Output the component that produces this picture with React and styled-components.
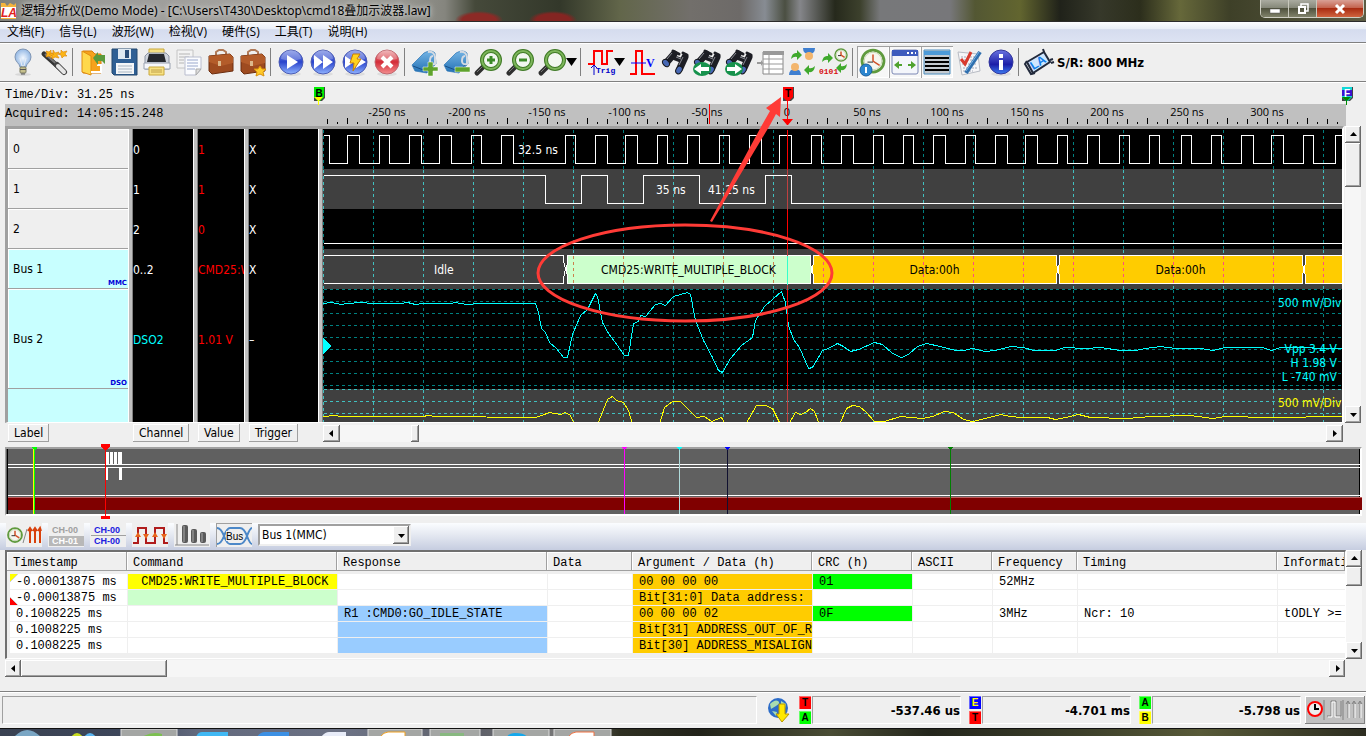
import React from 'react';
import styled, { createGlobalStyle, css } from 'styled-components';

const ui = "'DejaVu Sans Condensed', 'Noto Sans', 'Noto Sans CJK SC', sans-serif";
const menuFont = "'Open Sans', 'Noto Sans CJK SC', sans-serif";
const titleFont = "'Noto Sans', 'Noto Sans CJK SC', sans-serif";
const mono = "'Liberation Mono', monospace";

const GlobalStyle = createGlobalStyle`
    * {
        box-sizing: border-box;
    }
    body {
        margin: 0;
        background: #efefef;
        color: #000;
        font-family: ${ui};
        font-size: 12px;
        overflow: hidden;
    }
    button {
        font-family: inherit;
        padding: 0;
        border: 0;
        background: none;
    }
`;

const raised = css`
    background: #efefef;
    box-shadow: inset -1px -1px #696969, inset 1px 1px #fff,
        inset -2px -2px #a0a0a0;
`;

const Window = styled.div`
    height: 100vh;
    display: flex;
    flex-direction: column;
    overflow: hidden;

    & > * {
        flex-shrink: 0;
    }
`;

/* ---------- title and menu ---------- */

const TitleBar = styled.header`
    height: 22px;
    display: flex;
    align-items: flex-start;
    border-bottom: 1px solid #2b2b2b;
    background: radial-gradient(ellipse 24px 9px at 479px 20px, #8c2a26 70%, transparent),
        radial-gradient(ellipse 24px 9px at 553px 20px, #842522 70%, transparent),
        linear-gradient(
            90deg,
            #7f807a 0,
            #9a9a98 60px,
            #a3a29e 250px,
            #989892 400px,
            #85857e 445px,
            #45493a 475px,
            #33382a 560px,
            #62664a 620px,
            #726f6b 690px,
            #6d6a68 740px,
            #878c93 765px,
            #4b4f42 785px,
            #85868a 800px,
            #26291c 835px,
            #3c402c 860px,
            #77787a 880px,
            #77777a 950px,
            #535733 975px,
            #62652f 1020px,
            #20221a 1060px,
            #36382a 1100px,
            #2c2e1c 1140px,
            #66683a 1180px,
            #3e4028 1230px,
            #5c5c44 1366px
        );
`;

const TitleText = styled.h1`
    flex: 1;
    margin: 0 0 0 3px;
    font: 400 12px/21px ${titleFont};
    white-space: nowrap;
    text-shadow: 0 0 6px #ddd, 0 0 4px #ccc;
`;

const WindowControls = styled.div`
    display: flex;
    height: 18px;
    margin-right: 2px;
    border: 1px solid #cfcfc4;
    border-top: 0;
    border-radius: 0 0 5px 5px;
    overflow: hidden;
`;

const ControlButton = styled.button`
    width: ${(prop) => (prop.$close ? 46 : 28)}px;
    display: flex;
    align-items: center;
    justify-content: center;
    border-right: 1px solid ${(prop) => (prop.$close ? 'transparent' : '#c8c8bc')};
    background: ${(prop) =>
        prop.$close
            ? 'linear-gradient(#d9a095, #c4644f 45%, #a92c12 50%, #d0643f)'
            : 'linear-gradient(#aaaba0, #86887a 45%, #50523e 50%, #80826a)'};
`;

const MenuBar = styled.nav`
    height: 20px;
    display: flex;
    gap: 15px;
    padding-left: 7px;
    background: linear-gradient(#fcfdff, #e9eef7 35%, #d5dcee 38%, #dde3f3);
`;

const MenuLink = styled.a`
    font: 12px/19px ${menuFont};
    color: #000;
    text-decoration: none;
    white-space: nowrap;
`;

/* ---------- main toolbar ---------- */

const Toolbar = styled.div`
    height: 40px;
    display: flex;
    align-items: center;
    padding-left: 7px;
    border-top: 1px solid #808080;
    border-bottom: 1px solid #808080;
    box-shadow: inset 0 1px #fff, 0 1px #fff;
    white-space: nowrap;
`;

const ToolButton = styled.button`
    width: ${(prop) => (prop.$drop ? 42 : 32)}px;
    height: 32px;
    display: flex;
    align-items: center;
    ${(prop) =>
        prop.$pressed &&
        css`
            background: #f7f7f7;
            box-shadow: inset 1px 1px #a0a0a0, inset -1px -1px #fff;
        `}
`;

const Separator = styled.span`
    width: 1px;
    height: 28px;
    margin: 0 4px 0 1px;
    background: #808080;
`;

const SampleRate = styled.strong`
    margin-left: 2px;
    font-size: 13px;
`;

/* ---------- ruler ---------- */

const RulerPanel = styled.section`
    height: 44px;
    padding-top: 2px;
    display: flex;
`;

const InfoColumn = styled.div`
    width: 313px;
    flex-shrink: 0;
    padding-left: 5px;
    font: 12px/20px ${mono};
    white-space: nowrap;
`;

const InfoLine = styled.div`
    height: ${(prop) => (prop.$gray ? 22 : 20)}px;
    padding-top: ${(prop) => (prop.$gray ? 0 : 1)}px;
    background: ${(prop) => (prop.$gray ? '#c0c0c0' : 'transparent')};
`;

const RulerDrawing = styled.svg`
    flex: 1;
    min-width: 0;
    height: 42px;
`;

const ScaleText = styled.text`
    font: 11px 'Open Sans', sans-serif;
    text-anchor: middle;
`;

/* ---------- waveform area ---------- */

const WaveArea = styled.section`
    display: flex;
    height: 297px;
    padding: 0 5px;
    gap: 1px;
`;

const lanes = '120px 5px 60px 5px 46px 5px 69px 5px 1fr';

const WavePanel = styled.div`
    flex: 1;
    min-width: 0;
    display: grid;
    grid-template-columns: ${lanes};
    border: solid #a0a0a0;
    border-width: 3px 2px 1px 3px;
    border-right-color: #fff;
    border-bottom-color: #fff;
`;

const LabelCell = styled.div`
    height: ${(prop) => prop.$height}px;
    display: flex;
    align-items: center;
    justify-content: space-between;
    padding: 1px 0 0 5px;
    background: ${(prop) => (prop.$bus ? '#c8ffff' : '#efefef')};
    border-bottom: 1px solid #a0a0a0;
    box-shadow: inset 1px 1px #fff;

    small {
        align-self: flex-end;
        padding-right: 1px;
        font: 700 7px/9px 'DejaVu Sans', sans-serif;
        color: #0000d8;
    }
`;

const Lane = styled.div`
    overflow: hidden;
    background: ${(prop) => (prop.$label ? '#c8ffff' : '#000')};
`;

const LaneCell = styled.div`
    height: ${(prop) => prop.$height}px;
    display: flex;
    align-items: center;
    padding-top: 1px;
    color: ${(prop) => prop.$color};
    white-space: nowrap;
`;

const Splitter = styled.div`
    background: #c0c0c0;
    border-left: 1px solid #fff;
    border-right: 1px solid #808080;
`;

const WaveCanvas = styled.div`
    min-width: 0;
    height: 293px;
    overflow: hidden;
    background: #000;

    svg {
        display: block;
        width: 100%;
        height: 293px;
    }
`;

const WaveText = styled.text`
    font: 12px ${ui};
`;

/* ---------- scroll bars ---------- */

const ScrollTrack = styled.div`
    display: flex;
    flex-direction: ${(prop) => (prop.$vertical ? 'column' : 'row')};
    ${(prop) => (prop.$vertical ? 'width: 16px;' : 'height: 17px; flex: 1;')}
    background: #f6f6f6;
`;

const ScrollButton = styled.button`
    width: ${(prop) => (prop.$wide ? 17 : 16)}px;
    height: 17px;
    display: flex;
    align-items: center;
    justify-content: center;
    flex-shrink: 0;
    ${raised}
`;

const Thumb = styled.div`
    ${(prop) => (prop.$vertical ? `height: ${prop.$size}px;` : `width: ${prop.$size}px;`)}
    ${raised}
`;

const Gap = styled.div`
    flex: ${(prop) => (prop.$size ? `0 0 ${prop.$size}px` : 1)};
`;

const WaveFooter = styled.div`
    height: 20px;
    padding: 1px 23px 0 8px;
    display: grid;
    grid-template-columns: ${lanes};
`;

const HeaderButton = styled.button`
    grid-column: ${(prop) => prop.$column};
    justify-self: start;
    height: 18px;
    padding: 0 6px;
    font-size: 12px;
    line-height: 18px;
    background: #efefef;
    box-shadow: inset -1px -1px #a0a0a0, inset 1px 1px #fff;
`;

const FooterScroll = styled.div`
    grid-column: 9;
    display: flex;
    padding-top: 1px;
`;

/* ---------- overview ---------- */

const Overview = styled.section`
    height: 80px;
    padding: 4px 4px 0 5px;
`;

const OverviewBox = styled.div`
    height: 69px;
    border: 1px solid #a0a0a0;
    border-top-width: 2px;
    border-right: 2px solid #fff;
    border-bottom: 2px solid #fff;
    background: #606060;

    svg {
        display: block;
        width: 100%;
        height: 65px;
        overflow: visible;
    }
`;

/* ---------- bus toolbar ---------- */

const BusBar = styled.div`
    height: 27px;
    display: flex;
    gap: 6px;
    padding-left: 6px;
    background: linear-gradient(#fbfdff, #e4e8f1 45%, #c6cde0);
`;

const BusButton = styled.button`
    width: 36px;
    height: 24px;
    background: #efefef;
    ${(prop) => prop.$pressed && 'box-shadow: inset 1px 1px #a0a0a0;'}
`;

const BusSelect = styled.select`
    width: 153px;
    height: 22px;
    margin-top: 1px;
    padding-left: 2px;
    font: 12px ${ui};
    color: #000;
    background: #fff;
    border: 2px solid #a0a0a0;
    border-right-color: #efefef;
    border-bottom-color: #efefef;
    border-radius: 0;
    outline: 0;
    appearance: none;
`;

const SelectWrap = styled.div`
    position: relative;
    display: flex;
`;

const SelectArrow = styled.span`
    position: absolute;
    top: 3px;
    right: 2px;
    width: 16px;
    height: 18px;
    display: flex;
    align-items: center;
    justify-content: center;
    pointer-events: none;
    ${raised}
`;

/* ---------- packet list ---------- */

const ListArea = styled.section`
    display: flex;
    padding: 0 4px 0 5px;
`;

const ListFrame = styled.div`
    flex: 1;
    min-width: 0;
    height: 109px;
    overflow: hidden;
    border: solid #707070;
    border-width: 2px 1px 1px 2px;
    border-right-color: #fff;
    border-bottom-color: #fff;
`;

const PacketTable = styled.table`
    width: 100%;
    table-layout: fixed;
    border-collapse: separate;
    border-spacing: 0;
    font: 12px/14px ${mono};

    th,
    td {
        padding: 1px 0 0 6px;
        overflow: hidden;
        white-space: pre;
        text-align: left;
        font-weight: 400;
    }

    th {
        height: 19px;
        padding-top: 3px;
        background: #efefef;
        border-right: 1px solid #a0a0a0;
        border-bottom: 1px solid #a0a0a0;
        box-shadow: inset 1px 1px #fff;
    }

    tbody tr:first-child td {
        border-top: 3px solid #efefef;
    }
`;

const Cell = styled.td`
    height: 16px;
    border-left: ${(prop) => (prop.$first ? 3 : 1)}px solid #efefef;
    border-bottom: 1px solid #efefef;
    background: ${(prop) => prop.$fill || '#fff'};
    ${(prop) =>
        prop.$corner === 'top' &&
        'background: linear-gradient(135deg, #ff0 5px, #777 5px, #fff 6px);'}
    ${(prop) =>
        prop.$corner === 'bottom' &&
        'background: linear-gradient(45deg, #f00 5px, #777 5px, #fff 6px);'}
`;

const ListScroll = styled.div`
    display: flex;
    padding: 1px 21px 0 5px;
    height: 32px;
`;

/* ---------- status bar ---------- */

const StatusBar = styled.footer`
    height: 37px;
    display: flex;
    padding: 4px 1px 4px 2px;
    border-top: 1px solid #808080;
    box-shadow: inset 0 1px #fff;
`;

const StatusField = styled.div`
    height: 28px;
    width: ${(prop) => (prop.$grow ? 'auto' : '149px')};
    ${(prop) => prop.$grow && 'flex: 1;'}
    border: 1px solid #a0a0a0;
    border-right-color: #fff;
    border-bottom-color: #fff;
    text-align: right;
    font-size: 13px;
    font-weight: 700;
    line-height: 28px;
    white-space: nowrap;
`;

const GlobeButton = styled.button`
    width: 42px;
    height: 28px;
    display: flex;
    justify-content: center;
`;

const Measure = styled.div`
    display: flex;
    margin-right: ${(prop) => (prop.$last ? 4 : 8)}px;
`;

const BadgeStack = styled.div`
    width: 13px;
    display: flex;
    flex-direction: column;
    gap: 2px;
`;

const Badge = styled.span`
    height: 13px;
    width: 12px;
    font: 700 10px/13px 'Liberation Sans', sans-serif;
    text-align: center;
    color: ${(prop) => prop.$ink || '#000'};
    background: ${(prop) => prop.$fill};
    box-shadow: inset 1px 1px rgba(255, 255, 255, 0.4);
`;

const ModeButton = styled.button`
    width: 60px;
    height: 28px;
    background: #c0c0c0;
    box-shadow: inset -1px -1px #808080, inset 1px 1px #fff;
`;

const TaskBar = styled.div`
    flex: 1 1 0;
    min-height: 0;
    display: flex;
    overflow: hidden;
    border-top: 1px solid #111;
    background: linear-gradient(
        90deg,
        #3a4252 0,
        #3d465a 120px,
        #636a7e 200px,
        #6c7284 350px,
        #5f6169 480px,
        #777 560px,
        #2f3022 620px,
        #22231a 700px,
        #4a4d35 830px,
        #24261c 930px,
        #3c3f2a 1080px,
        #585a38 1200px,
        #2c2d20 1366px
    );
`;

/* ---------- icon drawings ---------- */

const Icon = ({ children, width = 32, height = 32 }) => (
    <svg width={width} height={height} viewBox={`0 0 ${width} ${height}`}>
        {children}
    </svg>
);

const Down = ({ x, y }) => <path d={`M${x} ${y}h11l-5.5 8z`} fill="#000" />;

const Bulb = () => (
    <>
        <ellipse cx="16" cy="28.500" rx="8" ry="1.500" fill="#d8d8d8" />
        <path d="M16 3a8 8 0 0 0-8 8c0 5 4.500 6 5 10h6c.5-4 5-5 5-10a8 8 0 0 0-8-8z" fill="url(#bulb)" stroke="#8096b4" />
        <path d="M13 12l2 8h2l2-8" fill="none" stroke="#e8eef6" />
        <rect x="13" y="21" width="6" height="6" rx="1" fill="#c6c08c" stroke="#7a7a60" />
        <path d="M13 23.500h6M14 28h4" stroke="#555" />
    </>
);

const Wand = () => (
    <>
        <path d="M5 8l20 18" stroke="#333" strokeWidth="5" strokeLinecap="round" />
        <path d="M6 8l15 13" stroke="#777" strokeWidth="2" />
        <path d="M18 19l7 7" stroke="#444" strokeWidth="6" strokeLinecap="round" />
        <path d="M19 20l6 6" stroke="#e6e6e6" strokeWidth="4" strokeLinecap="round" />
        <path d="M7 5l3 1 2-2v3l3 1-3 2v2l-2-2-3 1 1-3zM14 4l2 3 4-1-2 3 2 3-4-1-3 2v-3l-3-2 4-1zM22 4l2 2 4-1-2 3 2 2-3 0-2 2-1-3-3-1 3-1z" fill="#fcb514" stroke="#e08c10" strokeWidth=".7" />
    </>
);

const Folder = () => (
    <>
        <path d="M6 5h9l3 3h6v19H6z" fill="#f6a21c" stroke="#d67c0c" />
        <path d="M5 5l9 5v19l-9-3z" fill="#ffd84c" stroke="#e08c10" />
        <path d="M14 26h10v-7h-4" fill="none" stroke="#fff" strokeWidth="2" />
        <path d="M16 12l5-6v3h7v9l-3-3h-4v4z" fill="#5a9a3c" />
    </>
);

const Floppy = () => (
    <>
        <path d="M3 3h25v26H5l-2-2z" fill="#2f5f94" stroke="#24486f" />
        <path d="M9 3h13v10H9z" fill="#dfe9f2" />
        <path d="M16 4h4v8h-4z" fill="#2a4d78" />
        <path d="M7 17h18v11H7z" fill="#f4f6f8" />
        <path d="M9 20h14M9 23h14M9 26h14" stroke="#a9b6c2" />
    </>
);

const Printer = () => (
    <>
        <path d="M8 3h15v8H8z" fill="#f7e183" stroke="#c9a83c" />
        <path d="M4 10l3-3h18l3 3v13H4z" fill="#cfd4dd" stroke="#8b93a2" />
        <path d="M8 8h15l2 8H6z" fill="#26292f" />
        <path d="M3 17h26v6H3z" fill="#f6f7fb" stroke="#9aa2b0" />
        <path d="M8 21h15v8H8z" fill="#f7e183" stroke="#c9a83c" />
        <path d="M10 24h11M10 26h11" stroke="#c0a048" />
    </>
);

const Pages = () => (
    <>
        <path d="M4 4h16v18H4z" fill="#f3f3f3" stroke="#c4c4c4" />
        <path d="M6 8h11M6 11h10M6 14h5M6 17h5" stroke="#b5b5b5" />
        <path d="M12 11h16v12l-5 6H12z" fill="#fbfcff" stroke="#b9bdce" />
        <path d="M14 14h11M14 17h11M14 20h11M14 23h8" stroke="#9aa8cc" />
        <path d="M28 23h-5v6z" fill="#ddd" stroke="#aaa" />
    </>
);

const Briefcase = ({ star }) => (
    <>
        <path d="M11 9V6l3-2h4l3 2v3" fill="none" stroke="#b07a58" strokeWidth="2" />
        <path d="M4 10l21-2 3 3v14l-21 3-3-3z" fill="#9e4b20" stroke="#6c2e10" />
        <path d="M4 10l21-2 3 3v6l-12 3-12-4z" fill="#b35c2a" />
        <path d="M13 15h3v5h-3z" fill="#dcb98c" />
        {star && (
            <path d="M23 20l2 3 4 0-3 3 1 4-4-2-4 2 1-4-3-3 4 0z" fill="#ffc928" stroke="#d8900c" />
        )}
    </>
);

const Ball = ({ red, children }) => (
    <>
        <ellipse cx="16" cy="28" rx="10" ry="2" fill="#ddd" />
        <circle cx="16" cy="16" r="12" fill={red ? 'url(#redBall)' : 'url(#blueBall)'} stroke={red ? '#c06870' : '#4c5cb4'} />
        <path d="M6 13a10 9 0 0 1 20 0q-10 3-20 0z" fill="#fff" opacity=".25" />
        {children}
    </>
);

const Tag = ({ plus }) => (
    <>
        <path d="M3 19L15 7q7-4 11 0l1 11-9 9-12-2z" fill="url(#tag)" stroke="#2a74b4" strokeWidth=".7" />
        <path d="M4 20l13 5 10-8" fill="none" stroke="#184e86" />
        <path d="M19 6q6-1 7 5l0 7q-5 1-5-3 0-5 3-5" fill="none" stroke="#d4dae2" strokeWidth="2" />
        {plus ? (
            <path d="M19 16h5v5h5v4h-5v5h-5v-5h-5v-4h5z" fill="#5fa32c" stroke="#fff" strokeWidth=".5" />
        ) : (
            <path d="M14 21h15v5H14z" fill="#5fa32c" stroke="#fff" strokeWidth=".5" />
        )}
    </>
);

const Lens = ({ mark }) => (
    <>
        <path d="M4 27l8-8" stroke="#2f2f2f" strokeWidth="5" strokeLinecap="round" />
        <path d="M4 26l8-8" stroke="#777" />
        <circle cx="18" cy="14" r="9" fill="#f2f7f0" stroke="#3f7a25" strokeWidth="4" />
        <circle cx="18" cy="14" r="9" fill="none" stroke="#7db65b" strokeWidth="2" />
        {mark !== 'none' && <path d="M14 14h8" stroke="#3c8a28" strokeWidth="3" />}
        {mark === 'plus' && <path d="M18 10v8" stroke="#3c8a28" strokeWidth="3" />}
    </>
);

const Binoculars = ({ arrow }) => (
    <>
        <g fill="none" stroke="#1d1e24" strokeLinecap="round">
            <path d="M15 8l-7 8M26 11l-5 11" strokeWidth="7" />
            <path d="M16 12l8 3" strokeWidth="5" />
            <path d="M14 5l6 3M24 7l4 2" strokeWidth="3" />
        </g>
        <path d="M13 7l-5 6M24 11l-4 8M17 11l5 2" stroke="#8a8c94" />
        <ellipse cx="7" cy="17" rx="4" ry="3" transform="rotate(50 7 17)" fill="#4768b4" stroke="#15161a" />
        <ellipse cx="20" cy="24" rx="4" ry="3" transform="rotate(-60 20 24)" fill="#4768b4" stroke="#15161a" />
        {arrow && (
            <g transform={arrow === 'next' ? 'matrix(-1 0 0 1 22 0)' : ''}>
                <ellipse cx="11" cy="23" rx="9" ry="7" fill="#16924c" />
                <path d="M3 23l7-5v3h8v4h-8v3z" fill="#fff" />
            </g>
        )}
    </>
);

const GreenArrows = ({ x, y }) => (
    <path d={`M${x} ${y + 9}q1-7 6-6v-3l5 5-5 5v-3q-3-1-6 2z`} fill="#3fa92c" />
);

const Clock = ({ x, y, r }) => (
    <>
        <circle cx={x} cy={y} r={r} fill="#f6f6f0" stroke="#5f9a3e" strokeWidth={r / 4} />
        <circle cx={x} cy={y} r={r * 0.8} fill="none" stroke="#c8d8b8" />
        <path d={`M${x} ${y - r * 0.6}V${y}L${x + r * 0.6} ${y + r * 0.4}`} fill="none" stroke="#d0522a" strokeWidth="1.500" />
        <path d={`M${x - r * 0.5} ${y + r * 0.1}H${x}`} stroke="#333" />
    </>
);

const Person = ({ x, y, flip }) => (
    <g transform={`translate(${x} ${y}) scale(1 ${flip ? -1 : 1})`}>
        <path d="M-6 6q0-6 6-6t6 6z" fill="#3f7fd0" />
        <circle cx="0" cy="-2" r="4" fill="#f3b56c" />
    </g>
);

const toolGroups = [
    [<Bulb />, <Wand />],
    [<Folder />, <Floppy />, <Printer />, <Pages />, <Briefcase />, <Briefcase star />],
    [
        <Ball><path d="M12 9l11 7-11 7z" fill="#fff" /></Ball>,
        <Ball><path d="M7 9l9 7-9 7zM16 9l10 7-10 7z" fill="#fff" /></Ball>,
        <Ball>
            <path d="M6 10l9 6-9 6zM17 10l10 6-10 6z" fill="#fff" />
            <path d="M14 8h7l-3 5h4l-8 12 1-8h-4z" fill="#ffd21e" stroke="#c77c08" />
        </Ball>,
        <Ball red><path d="M11 11l10 10M21 11L11 21" stroke="#fff" strokeWidth="4" /></Ball>,
    ],
    [<Tag plus />, <Tag />, <Lens mark="plus" />, <Lens mark="minus" />, { drop: true, icon: <Lens mark="none" /> }],
    [
        {
            drop: true,
            icon: (
                <>
                    <path d="M3 18h6V5h8v13h5V5h6" fill="none" stroke="#f00" strokeWidth="2" />
                    <path d="M9 29V20M6 22l3-3 3 3" fill="none" stroke="#00c" />
                    <text x="11" y="27" fontSize="8" fontWeight="700" fontFamily="Liberation Mono" fill="#0000c8">Trig</text>
                </>
            ),
        },
        <>
            <path d="M3 28h6V5h6v23h13" fill="none" stroke="#f00" strokeWidth="2" />
            <path d="M4 17h15" stroke="#00f" />
            <text x="19" y="21" fontSize="12" fontWeight="700" fontFamily="Liberation Serif" fill="#00f">V</text>
        </>,
        <Binoculars />,
        <Binoculars arrow="prev" />,
        <Binoculars arrow="next" />,
        <>
            <path d="M2 16h4v-2l2 3-2 3v-2H2z" fill="#999" />
            <path d="M8 6h20v22H8z" fill="#fff" stroke="#888" />
            <path d="M8 5h21v4H8z" fill="#999" />
            <path d="M8 13h20M8 18h20M8 23h20M14 9v19" stroke="#999" />
        </>,
        <>
            <Person x={8} y={23} />
            <Person x={22} y={8} flip />
            <GreenArrows x={4} y={4} />
            <g transform="rotate(180 16 16)"><GreenArrows x={4} y={3} /></g>
        </>,
        <>
            <Clock x={22} y={9} r={6} />
            <GreenArrows x={3} y={7} />
            <g transform="rotate(180 16 16)"><GreenArrows x={4} y={5} /></g>
            <text x="0" y="28" fontSize="8" fontWeight="700" fontFamily="Liberation Mono" fill="#d81010">0101</text>
        </>,
    ],
    [
        {
            pressed: true,
            icon: (
                <>
                    <Clock x={16} y={15} r={11} />
                    <circle cx="9" cy="24" r="6" fill="#2c86d0" stroke="#1b5f9e" />
                    <path d="M9 21v6" stroke="#fff" strokeWidth="2" />
                </>
            ),
        },
        {
            pressed: true,
            icon: (
                <>
                    <rect x="3" y="4" width="26" height="24" rx="2" fill="#f4f6fb" stroke="#7c88b4" />
                    <path d="M3 4h26v6H3z" fill="#3d5bbd" />
                    <path d="M18 7h2M22 7h2M26 7h1" stroke="#fff" strokeWidth="2" />
                    <path d="M5 19l5-4v3h3v2h-3v3zM27 19l-5-4v3h-3v2h3v3z" fill="#4fa22f" />
                </>
            ),
        },
        {
            pressed: true,
            icon: (
                <>
                    <path d="M3 4h26v24H3z" fill="#c4cad0" stroke="#4c8fc0" />
                    <path d="M3 5h26v4H3z" fill="#4c9ad8" />
                    <path d="M4 12h24M4 16h24M4 20h24M4 24h24" stroke="#000" strokeWidth="2" />
                </>
            ),
        },
        <>
            <path d="M5 6l20 2 2 17-18 4z" fill="#f6f6f8" stroke="#b8bcc4" />
            <path d="M8 11h14M8 14h14M9 18h15M10 22h14M10 25h10" stroke="#a2a8b8" strokeDasharray="2 1" />
            <path d="M8 13l4 5 6-12" fill="none" stroke="#d93a2e" strokeWidth="3" />
            <path d="M27 6L13 27" stroke="#2f6fae" strokeWidth="4" />
            <path d="M26 6L13 25" stroke="#79b4e4" strokeWidth="1" />
        </>,
        <>
            <ellipse cx="16" cy="28" rx="10" ry="2" fill="#ddd" />
            <circle cx="16" cy="16" r="12" fill="url(#infoBall)" stroke="#34379c" />
            <path d="M16 8v4M16 14v10" stroke="#fff" strokeWidth="4" />
        </>,
    ],
    [
        <>
            <path d="M4 16L21 6l6 10L10 27z" fill="#cfe6ff" stroke="#222a3c" strokeWidth="2" />
            <path d="M4 15l-2 3 6 10 4-1M21 6l-1-3M27 14l3-1M28 17l3-1" fill="none" stroke="#222a3c" strokeWidth="2" />
            <text x="8" y="22" fontSize="12" fontWeight="700" fontFamily="Liberation Sans" fill="#0f7ce8" transform="rotate(-32 13 19)">LA</text>
        </>,
    ],
];

const busTools = [
    <>
        <Clock x={9} y={12} r={7} />
        <path d="M17 20l4-14" stroke="#888" />
        <path d="M24 20V6M29 20V6M34 20V6M22 8l2-3 2 3M27 8l2-3 2 3M32 8l2-3 1 3" fill="none" stroke="#d8400c" strokeWidth="2" />
    </>,
    <>
        <path d="M1 13h35v10H1z" fill="#b8b8b8" />
        <text x="4" y="10" fontSize="9" fontWeight="700" fontFamily="Liberation Sans" fill="#a0a0a0">CH-00</text>
        <text x="4" y="21" fontSize="9" fontWeight="700" fontFamily="Liberation Sans" fill="#fff">CH-01</text>
    </>,
    <>
        <path d="M1 12.500h35" stroke="#a0a0a0" />
        <text x="4" y="10" fontSize="9" fontWeight="700" fontFamily="Liberation Sans" fill="#2020e0">CH-00</text>
        <text x="4" y="21" fontSize="9" fontWeight="700" fontFamily="Liberation Sans" fill="#2020e0">CH-00</text>
    </>,
    <>
        <path d="M1 20h5V5h8v15h9V5h9v15h4" fill="none" stroke="#b01c1c" strokeWidth="2" />
        <path d="M3 14l3-5 3 5zM11 11h6l-3 5zM20 14l3-5 3 5zM29 11h6l-3 5z" fill="#e8661c" />
    </>,
    <>
        <path d="M3 1v21M1 22h34" stroke="#888" strokeWidth="1" />
        {[[8, 2], [17, 6], [26, 9]].map(([x, y]) => (
            <g key={x}>
                <rect x={x} y={y} width="6" height={20 - y} rx="2" fill="#5a5a5a" />
                <path d={`M${x + 2} ${y + 1}V19`} stroke="#aaa" />
            </g>
        ))}
    </>,
    <>
        <path d="M1 5q4 0 7 8t6 8h10q4 0 7-8t5-8M1 21q4 0 7-8t6-8h10q4 0 7 8t5 8" fill="none" stroke="#4c88c8" strokeWidth="2" />
        <path d="M10 8h17v10H10z" fill="#efefef" />
        <text x="10" y="17" fontSize="10" fontFamily="Liberation Sans">Bus</text>
    </>,
];

/* ---------- signals ---------- */

const clockEdges = [
    329, 347, 359, 379, 389, 409, 421, 439, 451, 471, 481, 501, 513, 565, 575,
    595, 607, 625, 637, 657, 667, 687, 699, 719, 729, 749, 761, 779, 791, 811,
    821, 841, 853, 873, 883, 903, 913, 933, 945, 965, 975, 995, 1007, 1025,
    1037, 1057, 1067, 1087, 1099, 1119, 1129, 1149, 1159, 1181, 1191, 1211,
    1221, 1241, 1253, 1271, 1283, 1303, 1313, 1335,
];
const dataEdges = [545, 581, 607, 643, 699, 765, 791];

const dso2 =
    '323,303 331,302 341,304 347,303 360,302 372,303 400,303 407,302 415,304 422,303 450,303 455,302 466,304 480,303 500,303 508,303 535,303 538,312 541,328 545,332 549,342 556,348 563,357 567,357 572,334 580,315 587,309 595,293 597,296 602,322 608,333 617,345 624,355 628,355 633,323 638,321 640,315 645,316 655,304 660,303 665,305 673,296 687,292 690,294 695,320 703,340 712,357 718,370 722,372 730,358 741,345 752,337 755,320 764,306 781,291 785,302 788,325 793,339 799,347 808,368 812,367 822,350 828,348 837,343 843,346 850,351 858,349 874,342 882,344 892,353 901,357 908,354 917,346 926,343 940,346 955,350 963,350 972,348 985,351 995,350 1010,346 1023,347 1033,350 1055,350 1064,347 1085,348 1100,347 1120,350 1135,350 1145,348 1160,346 1175,348 1200,348 1212,350 1225,347 1262,347 1271,350 1280,347 1342,348';

const dso3 =
    '323,416 335,415 340,416 422,416 428,415 435,416 535,417 541,415 549,412 560,414 565,412 570,415 574,424 597,424 607,399 612,396 616,400 623,402 628,410 632,424 659,424 664,407 672,401 680,401 688,409 696,417 704,416 711,421 721,417 725,424 745,424 756,405 765,405 772,408 780,424 788,424 795,412 800,414 805,412 810,408 814,411 819,424 839,424 846,408 852,405 859,406 866,412 874,421 884,421 900,416 922,418 932,416 944,411 953,412 963,419 972,421 985,418 1000,414 1010,416 1020,417 1047,417 1055,419 1065,417 1078,414 1090,417 1127,418 1150,416 1190,415 1212,418 1225,416 1270,417 1342,416';

const square = (edges, high, low) => {
    let level = high;
    return edges.reduce((d, x) => {
        level = level === high ? low : high;
        return `${d}H${x}V${level}`;
    }, `M323 ${high}`) + 'H2400';
};

const gridBands = [
    [129, 169, '#008080'],
    [169, 209, '#40c0c0'],
    [209, 249, '#008080'],
    [249, 289, '#40c0c0'],
    [289, 389, '#008080'],
    [389, 422, '#40c0c0'],
];
const gridColumns = Array.from({ length: 42 }, (_, i) => 323 + i * 50);
const gridRows = [289, 301, 313, 325, 337, 349, 361, 373, 385, 389, 401, 413];

const packets = [
    { x: 567, width: 243, fill: '#ccffcc', dash: '#cc7f4c', text: 'CMD25:WRITE_MULTIPLE_BLOCK' },
    { x: 813, width: 243, fill: '#ffcc00', dash: '#ff4c80', text: 'Data:00h' },
    { x: 1059, width: 243, fill: '#ffcc00', dash: '#ff4c80', text: 'Data:00h' },
    { x: 1305, width: 243, fill: '#ffcc00', dash: '#ff4c80', text: '' },
];

const Waves = () => (
    <svg>
        <g transform="translate(-323 -129)" shapeRendering="crispEdges">
            {[169, 249].map((y) => (
                <rect key={y} x="323" y={y} width="2100" height="40" fill="#404040" />
            ))}
            <rect x="323" y="389" width="2100" height="34" fill="#404040" />
            <g transform="translate(.5 .5)">
                {gridBands.map(([top, bottom, color]) =>
                    gridColumns.map((x) => (
                        <path key={x + color + top} d={`M${x} ${top}V${bottom - 1}`} stroke={color} strokeDasharray="3 3" />
                    ))
                )}
                {gridRows.map((y) => (
                    <path key={y} d={`M323 ${y}H2400`} stroke={y > 388 ? '#40c0c0' : '#008080'} strokeDasharray="3 3" />
                ))}
                <g fill="none" stroke="#fff">
                    <path d={square(clockEdges, 135, 163)} />
                    <path d={square(dataEdges, 175, 203)} />
                    <path d="M323 243H2400" />
                    <path d="M323 255H563V260L565 268L563 278V283H323" />
                </g>
                {packets.map((item) => (
                    <g key={item.x}>
                        <path
                            d={`M${item.x} 255h${item.width}v6l1 8l-1 8v6h-${item.width}v-6l-1 -8l1 -8z`}
                            fill={item.fill}
                            stroke="#fff"
                        />
                        {gridColumns
                            .filter((x) => x > item.x && x < item.x + item.width)
                            .map((x) => (
                                <path key={x} d={`M${x} 255V283`} stroke={item.dash} strokeDasharray="3 3" />
                            ))}
                    </g>
                ))}
                <polyline points={dso2} fill="none" stroke="#0ff" />
                <polyline points={dso3} fill="none" stroke="#ff0" />
                <path d="M787 129V422" stroke="#f00" />
                <path d="M787 169V209M787 249V289M787 389V422" stroke="#bf4040" />
                <path d="M787 255V284" stroke="#3fc" />
            </g>
            <path d="M323 338l8 8-8 8z" fill="#0ff" />
        </g>
        <g transform="translate(-323 -129)" fill="#fff">
            <WaveText x="518" y="154">32.5 ns</WaveText>
            <WaveText x="656" y="194">35 ns</WaveText>
            <WaveText x="708" y="194">41.25 ns</WaveText>
            <WaveText x="434" y="274">Idle</WaveText>
            {packets.map((item) => (
                <WaveText key={item.x} x={item.x + item.width / 2} y="274" fill="#000" textAnchor="middle">
                    {item.text}
                </WaveText>
            ))}
        </g>
        <svg x="100%" overflow="visible">
            <g transform="translate(-1342 -129)" fill="#0ff">
                <WaveText x="1278" y="307">500 mV/Div</WaveText>
                <WaveText x="1337" y="353" textAnchor="end">Vpp 3.4 V</WaveText>
                <WaveText x="1337" y="367" textAnchor="end">H 1.98 V</WaveText>
                <WaveText x="1337" y="381" textAnchor="end">L -740 mV</WaveText>
                <WaveText x="1278" y="407" fill="#ff0">500 mV/Div</WaveText>
            </g>
        </svg>
    </svg>
);

const Flag = ({ x, letter, fill, point, band, ink = '#000' }) => (
    <g>
        <path d={`M${x - 5} 87h11v11l-3 3h-8z`} fill="#444" />
        <path d={`M${x - 5} 87h10v10l-4 4h-2l-4-4z`} fill={fill} />
        {band && <path d={`M${x - 5} 90h10v6h-10z`} fill={band} />}
        <path d={`M${x - 5} 97h9l-4 4v4h-1v-4z`} fill={point} />
        <text x={x} y="97" textAnchor="middle" fontSize="10" fontWeight="700" fontFamily="Liberation Sans" fill={ink}>
            {letter}
        </text>
    </g>
);

const Ruler = () => (
    <RulerDrawing>
        <svg width="100%" height="42">
            <rect x="-20" y="20" width="100%" height="22" fill="#c0c0c0" />
            <g transform="translate(-313 -84)" shapeRendering="crispEdges">
                {Array.from({ length: 102 }, (_, i) => i * 10 - 460).map((dx) => {
                    const size = dx % 40 === 0 ? 6 : dx % 20 === 0 ? 5 : 2;
                    return <rect key={dx} x={787 + dx} y={124 - size} width="1" height={size} />;
                })}
                <rect x="709" y="104" width="1" height="20" fill="#f00" />
            </g>
            <g transform="translate(-313 -84)">
                {Array.from({ length: 12 }, (_, i) => i * 50 - 250).map((ns) => (
                    <ScaleText key={ns} x={787 + ns * 1.6} y="116">
                        {ns === 0 ? '0' : `${ns} ns`}
                    </ScaleText>
                ))}
                <path d="M787 104h1v15h5l-5 6h-1l-5-6h5z" fill="#f00" />
                <Flag x={319} letter="B" fill="#0e0" point="#ff0" />
                <Flag x={788} letter="T" fill="#f00" point="#f00" />
            </g>
        </svg>
        <svg x="100%" overflow="visible">
            <g transform="translate(-1366 -84)">
                <Flag x={1347} letter="F" fill="#12d8d8" band="#3a10d0" point="#080" ink="#fff" />
            </g>
        </svg>
    </RulerDrawing>
);

const Annotation = styled.svg`
    position: absolute;
    left: 530px;
    top: 90px;
    width: 310px;
    height: 240px;
    pointer-events: none;
`;

const labelRows = [
    { label: '0', channel: '0', value: '1', trigger: 'X', height: 40 },
    { label: '1', channel: '1', value: '1', trigger: 'X', height: 40 },
    { label: '2', channel: '2', value: '0', trigger: 'X', height: 40 },
    { label: 'Bus 1', channel: '0..2', value: 'CMD25:W', trigger: 'X', height: 40, type: 'MMC' },
    { label: 'Bus 2', channel: 'DSO2', value: '1.01 V', trigger: '–', height: 100, type: 'DSO' },
];

const columns = [
    ['Timestamp', 120],
    ['Command', 210],
    ['Response', 210],
    ['Data', 85],
    ['Argument / Data (h)', 180],
    ['CRC (h)', 100],
    ['ASCII', 80],
    ['Frequency', 85],
    ['Timing', 200],
    ['Information'],
];

const yellow = '#ffff00';
const mint = '#ccffcc';
const blue = '#99ccff';
const gold = '#ffcc00';
const lime = '#00ff00';

const rows = [
    [['-0.00013875 ms'], [' CMD25:WRITE_MULTIPLE_BLOCK', yellow], [''], [''], ['00 00 00 00', gold], ['01', lime], [''], ['52MHz'], [''], ['']],
    [['-0.00013875 ms'], ['', mint], [''], [''], ['Bit[31:0] Data address:', gold], [''], [''], [''], [''], ['']],
    [['0.1008225 ms'], [''], ['R1 :CMD0:GO_IDLE_STATE', blue], [''], ['00 00 00 02', gold], ['0F', lime], [''], ['3MHz'], ['Ncr: 10'], ['tODLY >=']],
    [['0.1008225 ms'], [''], ['', blue], [''], ['Bit[31] ADDRESS_OUT_OF_R', gold], [''], [''], [''], [''], ['']],
    [['0.1008225 ms'], [''], ['', blue], [''], ['Bit[30] ADDRESS_MISALIGN', gold], [''], [''], [''], [''], ['']],
];

const Arrow = ({ dir }) => {
    const shapes = {
        up: 'M0 5h7l-3.500-4z',
        down: 'M0 2h7L3.500 6z',
        left: 'M5 0v7L1 3.500z',
        right: 'M2 0v7l4-3.500z',
    };
    return (
        <svg width="7" height="7">
            <path d={shapes[dir]} />
        </svg>
    );
};

const Overlook = () => (
    <svg shapeRendering="crispEdges">
        <rect width="1" height="100%" fill="#000" x="1" />
        <svg x="100%" overflow="visible">
            <rect x="-1" width="1" height="65" />
        </svg>
        <rect y="15" x="2" width="100%" height="1" fill="#fff" />
        <rect y="18" x="2" width="100%" height="1" fill="#fff" />
        <rect y="46" x="2" width="100%" height="1" fill="#fff" />
        <rect y="48" x="2" width="100%" height="1" fill="#c06060" />
        <rect y="49" x="2" width="100%" height="12" fill="#800000" />
        <g transform="translate(-6 -449)">
            <path d="M106 452h3v12h-3zM110 452h3v12h-3zM114 452h3v12h-3zM118 452h4v12h-4zM106 468h2v12h-2zM119 468h3v12h-3z" fill="#fff" />
            <path d="M33 449h1v65h-1z" fill="#ff0" />
            <path d="M34 449h1v65h-1zM32 447h5v1l-2 2h-1z" fill="#0f0" />
            <path d="M101 444h9v3l-4 3v66h4v3h-9v-3h4v-66l-4-3z" fill="#f00" />
            <path d="M622 447h5l-2 3v64h-1v-64z" fill="#f0f" />
            <path d="M679 449h1v65h-1z" fill="#b0dcdc" />
            <path d="M677 447h5l-2 3h-1z" fill="#0ff" />
            <path d="M727 449h1v65h-1z" fill="#101030" />
            <path d="M725 447h5l-2 3h-1z" fill="#00f" />
            <path d="M948 447h5l-2 3v64h-1v-64z" fill="#008000" />
        </g>
    </svg>
);

const HiddenDefs = styled.svg`
    position: absolute;
`;

const Gradients = () => (
    <HiddenDefs width="0" height="0">
        <defs>
            <radialGradient id="bulb">
                <stop offset="0" stopColor="#f2f8ff" />
                <stop offset="1" stopColor="#94b8e4" />
            </radialGradient>
            <linearGradient id="blueBall" x2="0" y2="1">
                <stop offset="0" stopColor="#7c8fe4" />
                <stop offset=".5" stopColor="#2a44cc" />
                <stop offset="1" stopColor="#90b4ff" />
            </linearGradient>
            <linearGradient id="infoBall" x2="0" y2="1">
                <stop offset="0" stopColor="#6a74e0" />
                <stop offset=".6" stopColor="#1c1fa8" />
                <stop offset="1" stopColor="#3c7cf0" />
            </linearGradient>
            <linearGradient id="redBall" x2="0" y2="1">
                <stop offset="0" stopColor="#eca0a4" />
                <stop offset=".5" stopColor="#d42c38" />
                <stop offset="1" stopColor="#f49090" />
            </linearGradient>
            <linearGradient id="tag" x2="0" y2="1">
                <stop offset="0" stopColor="#74b4e4" />
                <stop offset="1" stopColor="#2270b4" />
            </linearGradient>
        </defs>
    </HiddenDefs>
);

const measures = [
    { value: '-537.46 us', top: ['T', '#f00'], bottom: ['A', '#0f0'] },
    { value: '-4.701 ms', top: ['E', '#00f', '#ff0'], bottom: ['T', '#f00'] },
    { value: '-5.798 us', top: ['A', '#0f0'], bottom: ['B', '#ff0'] },
];

const App = () => {
    return (
        <Window>
            <GlobalStyle />
            <Gradients />
            <TitleBar>
                <Icon width={18} height={21}>
                    <path d="M1 3h4l2 3 3-3 4 2 2-2v16H1z" fill="#f4b43c" />
                    <path d="M1 7h15v11H1z" fill="#fff" />
                    <text x="1" y="17" fontSize="12" fontWeight="700" fontStyle="italic" fontFamily="Liberation Sans" fill="#e02020">LA</text>
                </Icon>
                <TitleText>逻辑分析仪(Demo Mode) - [C:\Users\T430\Desktop\cmd18叠加示波器.law]</TitleText>
                <WindowControls>
                    <ControlButton aria-label="Minimize">
                        <Icon width={12} height={12}>
                            <path d="M1 6h10v4H1z" fill="#fff" stroke="#555" strokeWidth=".5" />
                        </Icon>
                    </ControlButton>
                    <ControlButton aria-label="Restore">
                        <Icon width={12} height={12}>
                            <path d="M4 3V1h7v7H9" fill="none" stroke="#fff" strokeWidth="1.500" />
                            <path d="M2 4h6v6H2z" fill="none" stroke="#fff" strokeWidth="2" />
                        </Icon>
                    </ControlButton>
                    <ControlButton aria-label="Close" $close>
                        <Icon width={12} height={12}>
                            <path d="M2 2l8 8M10 2l-8 8" stroke="#fff" strokeWidth="3" />
                        </Icon>
                    </ControlButton>
                </WindowControls>
            </TitleBar>
            <MenuBar>
                {['文档(F)', '信号(L)', '波形(W)', '检视(V)', '硬件(S)', '工具(T)', '说明(H)'].map((item) => (
                    <MenuLink key={item} href="#">{item}</MenuLink>
                ))}
            </MenuBar>

            <Toolbar>
                {toolGroups.map((group, i) => (
                    <React.Fragment key={i}>
                        {i > 0 && <Separator />}
                        {group.map((tool, j) => (
                            <ToolButton key={j} $drop={tool.drop} $pressed={tool.pressed}>
                                <Icon width={tool.drop ? 42 : 32}>
                                    {tool.icon || tool}
                                    {tool.drop && <Down x={29} y={12} />}
                                </Icon>
                            </ToolButton>
                        ))}
                    </React.Fragment>
                ))}
                <SampleRate>S/R: 800 MHz</SampleRate>
            </Toolbar>

            <RulerPanel>
                <InfoColumn>
                    <InfoLine>Time/Div: 31.25 ns</InfoLine>
                    <InfoLine $gray>Acquired: 14:05:15.248</InfoLine>
                </InfoColumn>
                <Ruler />
            </RulerPanel>

            <WaveArea>
                <WavePanel>
                    <Lane $label>
                        {labelRows.map((row) => (
                            <LabelCell key={row.label} $height={row.height} $bus={row.type}>
                                {row.label}
                                {row.type && <small>{row.type}</small>}
                            </LabelCell>
                        ))}
                    </Lane>
                    <Splitter />
                    <Lane>
                        {labelRows.map((row) => (
                            <LaneCell key={row.label} $height={row.height} $color={row.type === 'DSO' ? '#0ff' : '#fff'}>
                                {row.channel}
                            </LaneCell>
                        ))}
                    </Lane>
                    <Splitter />
                    <Lane>
                        {labelRows.map((row) => (
                            <LaneCell key={row.label} $height={row.height} $color="#f00">{row.value}</LaneCell>
                        ))}
                    </Lane>
                    <Splitter />
                    <Lane>
                        {labelRows.map((row) => (
                            <LaneCell key={row.label} $height={row.height} $color="#fff">{row.trigger}</LaneCell>
                        ))}
                    </Lane>
                    <Splitter />
                    <WaveCanvas>
                        <Waves />
                    </WaveCanvas>
                </WavePanel>
                <ScrollTrack $vertical>
                    <ScrollButton aria-label="Scroll up"><Arrow dir="up" /></ScrollButton>
                    <Thumb $vertical $size={44} />
                    <Gap />
                    <ScrollButton aria-label="Scroll down"><Arrow dir="down" /></ScrollButton>
                </ScrollTrack>
            </WaveArea>
            <WaveFooter>
                <HeaderButton $column={1}>Label</HeaderButton>
                <HeaderButton $column={3}>Channel</HeaderButton>
                <HeaderButton $column={5}>Value</HeaderButton>
                <HeaderButton $column={7}>Trigger</HeaderButton>
                <FooterScroll>
                    <ScrollTrack>
                        <ScrollButton $wide aria-label="Scroll left"><Arrow dir="left" /></ScrollButton>
                        <Gap $size={71} />
                        <Thumb $size={8} />
                        <Gap />
                        <ScrollButton $wide aria-label="Scroll right"><Arrow dir="right" /></ScrollButton>
                    </ScrollTrack>
                </FooterScroll>
            </WaveFooter>

            <Overview>
                <OverviewBox>
                    <Overlook />
                </OverviewBox>
            </Overview>

            <BusBar>
                {busTools.map((icon, i) => (
                    <BusButton key={i} $pressed={i === 5}>
                        <Icon width={36} height={24}>{icon}</Icon>
                    </BusButton>
                ))}
                <SelectWrap>
                    <BusSelect aria-label="Bus">
                        <option>Bus 1(MMC)</option>
                    </BusSelect>
                    <SelectArrow><Arrow dir="down" /></SelectArrow>
                </SelectWrap>
            </BusBar>

            <ListArea>
                <ListFrame>
                    <PacketTable>
                        <colgroup>
                            {columns.map(([name, width]) => (
                                <col key={name} width={width} />
                            ))}
                        </colgroup>
                        <thead>
                            <tr>
                                {columns.map(([name]) => (
                                    <th key={name}>{name}</th>
                                ))}
                            </tr>
                        </thead>
                        <tbody>
                            {rows.map((row, i) => (
                                <tr key={i}>
                                    {row.map(([text, fill], j) => (
                                        <Cell
                                            key={j}
                                            $fill={fill}
                                            $first={j === 0}
                                            $corner={j === 0 && ['top', 'bottom'][i]}
                                        >
                                            {text}
                                        </Cell>
                                    ))}
                                </tr>
                            ))}
                        </tbody>
                    </PacketTable>
                </ListFrame>
                <ScrollTrack $vertical>
                    <ScrollButton aria-label="Scroll up"><Arrow dir="up" /></ScrollButton>
                    <Thumb $vertical $size={19} />
                    <Gap />
                    <ScrollButton aria-label="Scroll down"><Arrow dir="down" /></ScrollButton>
                </ScrollTrack>
            </ListArea>
            <ListScroll>
                <ScrollTrack>
                    <ScrollButton aria-label="Scroll left"><Arrow dir="left" /></ScrollButton>
                    <Thumb $size={146} />
                    <Gap />
                    <ScrollButton aria-label="Scroll right"><Arrow dir="right" /></ScrollButton>
                </ScrollTrack>
            </ListScroll>

            <StatusBar>
                <StatusField $grow />
                <GlobeButton aria-label="Update">
                    <Icon width={24} height={28}>
                        <circle cx="12" cy="12" r="10" fill="#2c6cc8" />
                        <path d="M4 8q5-5 8-3t-2 5-5 3zM15 5l5 3-1 5-4-1zM6 15l5 1-1 4z" fill="#a8dcb0" />
                        <path d="M13 8h6v10h4l-7 8-6-8h3z" fill="#ffe800" stroke="#b89800" />
                    </Icon>
                </GlobeButton>
                {measures.map((item, i) => (
                    <Measure key={item.value} $last={i === 2}>
                        <BadgeStack>
                            <Badge $fill={item.top[1]} $ink={item.top[2]}>{item.top[0]}</Badge>
                            <Badge $fill={item.bottom[1]}>{item.bottom[0]}</Badge>
                        </BadgeStack>
                        <StatusField>{item.value}</StatusField>
                    </Measure>
                ))}
                <ModeButton aria-label="Trigger mode">
                    <Icon width={60} height={28}>
                        <circle cx="10" cy="13" r="7" fill="#eee" stroke="#f00" strokeWidth="2" />
                        <path d="M10 8v5h4" fill="none" stroke="#000" strokeWidth="2" />
                        <path d="M19 4v20M38 4v20" stroke="#808080" />
                        <path d="M22 20h4V5h5v15h5V5" fill="none" stroke="#808080" />
                        <path d="M23 21h4V6h3v15h5" fill="none" stroke="#fff" />
                        <path d="M43 22V6M49 22V6M55 22V6M41 8l2-3 2 3M47 8l2-3 2 3M53 8l2-3 2 3" fill="none" stroke="#808080" />
                        <path d="M44 22V8M50 22V8M56 22V8" stroke="#fff" />
                    </Icon>
                </ModeButton>
            </StatusBar>

            <TaskBar aria-hidden="true">
                <Icon width={640} height={8}>
                    <path d="M14 8q13-14 27 0z" fill="#7aa6c4" />
                    <path d="M71 8q6-8 12 0z" fill="#c8dc20" />
                    <path d="M84 8q6-8 12 0z" fill="#58b4f0" />
                    <path d="M121 0h56v8h-56zM368 0h54v8h-54zM430 0h50v8h-50zM493 0h56v8h-56zM554 0h57v8h-57z" fill="#a4a6a4" stroke="#ddd" />
                    <path d="M142 8q10-6 20-3v3z" fill="#7cc050" />
                    <path d="M196 8q2-5 6-5h26v5z" fill="#40b8f4" />
                    <path d="M257 8q3-5 8-5h24v5z" fill="#3c90e4" />
                    <path d="M321 8q4-5 8-5h17v5z" fill="#e8ecf8" />
                    <path d="M380 8q4-5 8-5h17v5z" fill="#fff" stroke="#f0a020" />
                    <path d="M440 4h24v4h-24z" fill="#88b880" />
                    <path d="M507 8q2-4 8-4 10 0 12 4z" fill="#14a8ec" />
                    <path d="M568 8q4-5 8-5h18v5z" fill="#fff" stroke="#f07040" />
                </Icon>
            </TaskBar>

            <Annotation>
                <g transform="translate(-530 -90)">
                    <ellipse cx="685" cy="273" rx="147" ry="48" fill="none" stroke="#ff3b36" strokeWidth="3" />
                    <path d="M781 97L766 108l4 3-8 14-52 96 2 1 58-97 6-11 4 3z" fill="#ff3b36" />
                </g>
            </Annotation>
        </Window>
    );
};

export default App;
